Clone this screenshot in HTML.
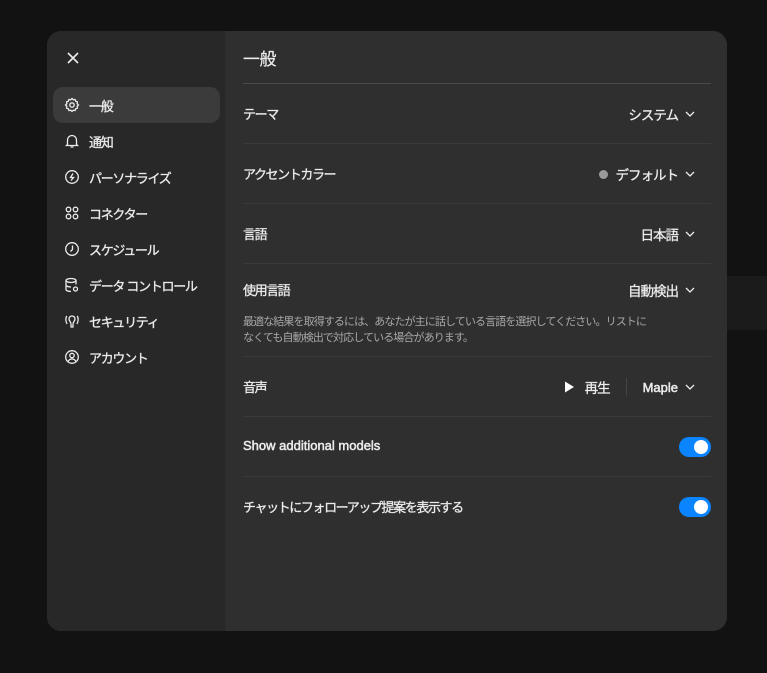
<!DOCTYPE html>
<html><head><meta charset="utf-8"><style>
*{box-sizing:border-box;margin:0;padding:0}
body{width:767px;height:673px;background:#121212;font-family:"Liberation Sans","Noto Sans CJK JP",sans-serif;color:#ececec;position:relative;overflow:hidden}
.band{position:absolute;left:700px;top:276px;width:67px;height:54px;background:#1b1b1b}
.modal{position:absolute;left:47px;top:31px;width:680px;height:600px;background:#2f2f2f;border-radius:14px;overflow:hidden}
.side{position:absolute;left:0;top:0;width:179px;height:600px;background:#282828;border-right:1px solid #2c2c2c}
.close{position:absolute;left:19px;top:20px}
.item{position:absolute;left:6px;width:167px;height:36px;border-radius:10px;display:flex;align-items:center;padding-left:11px;font-size:13px;letter-spacing:-1.3px;color:#ececec;-webkit-text-stroke:0.3px #ececec}
.item svg{margin-right:9px}
.item.active{background:#3b3b3b}
.main{position:absolute;left:196px;top:0;width:468px}
.title{position:absolute;top:14px;left:0;font-size:17px;letter-spacing:-0.5px;-webkit-text-stroke:0.2px #ececec}
.hr0{position:absolute;top:52px;left:0;width:468px;height:1px;background:#4a4a4a}
.row{position:absolute;left:0;width:468px;border-bottom:1px solid #3a3a3a}
.lab{position:absolute;left:0;font-size:13px;letter-spacing:-1.4px;-webkit-text-stroke:0.3px #ececec}
.lab.en{letter-spacing:0;font-size:13px;-webkit-text-stroke:0.5px #ececec}
.val{position:absolute;right:16px;font-size:13.5px;letter-spacing:-1px;display:flex;align-items:center;-webkit-text-stroke:0.3px #ececec}
.chev{margin-left:7px}
.desc{position:absolute;left:0;top:50px;font-size:11px;letter-spacing:-0.9px;color:#a8a8a8;line-height:16px}
.tog{position:absolute;right:0;width:32px;height:20px;border-radius:10px;background:#0a84ff}
.tog:after{content:"";position:absolute;right:3px;top:3px;width:14px;height:14px;border-radius:50%;background:#fff}
</style></head><body>
<div class="band"></div>
<div class="modal">
 <div class="side">
  <svg class="close" width="14" height="14" viewBox="0 0 14 14"><path d="M2 2L12 12M12 2L2 12" stroke="#ececec" stroke-width="1.6"/></svg>
  <div class="item active" style="top:56px"><svg width="16" height="16" viewBox="0 0 16 16" fill="none" stroke="#ececec" stroke-width="1.3"><path d="M8 1.5l1.3 1.3 1.8-.3.6 1.7 1.7.6-.3 1.8L14.5 8l-1.4 1.4.3 1.8-1.7.6-.6 1.7-1.8-.3L8 14.5l-1.3-1.3-1.8.3-.6-1.7-1.7-.6.3-1.8L1.5 8l1.4-1.4-.3-1.8 1.7-.6.6-1.7 1.8.3z"/><circle cx="8" cy="8" r="2.2"/></svg>一般</div>
  <div class="item" style="top:92px"><svg width="16" height="16" viewBox="0 0 16 16" fill="none" stroke="#ececec" stroke-width="1.3"><path d="M3.5 11.5V7a4.5 4.5 0 019 0v4.5l1 1h-11zM6.5 14h3"/></svg>通知</div>
  <div class="item" style="top:128px"><svg width="16" height="16" viewBox="0 0 16 16" fill="none" stroke="#ececec" stroke-width="1.3"><circle cx="8" cy="8" r="6.3"/><path d="M9 4.5L6.5 8.5h3L7 11.5"/></svg>パーソナライズ</div>
  <div class="item" style="top:164px"><svg width="16" height="16" viewBox="0 0 16 16" fill="none" stroke="#ececec" stroke-width="1.3"><circle cx="4.5" cy="4.5" r="2.3"/><circle cx="11.5" cy="4.5" r="2.3"/><circle cx="4.5" cy="11.5" r="2.3"/><circle cx="11.5" cy="11.5" r="2.3"/></svg>コネクター</div>
  <div class="item" style="top:200px"><svg width="16" height="16" viewBox="0 0 16 16" fill="none" stroke="#ececec" stroke-width="1.3"><circle cx="8" cy="8" r="6.3"/><path d="M8.5 4.5v4L6.5 10.5"/></svg>スケジュール</div>
  <div class="item" style="top:236px"><svg width="16" height="16" viewBox="0 0 16 16" fill="none" stroke="#ececec" stroke-width="1.3"><ellipse cx="7" cy="3.5" rx="5" ry="2"/><path d="M2 3.5v9c0 1 2 2 5 2M12 3.5v4M2 8c0 1 2 2 5 2"/><circle cx="11.5" cy="12" r="2"/></svg>データ コントロール</div>
  <div class="item" style="top:272px"><svg width="16" height="16" viewBox="0 0 16 16" fill="none" stroke="#ececec" stroke-width="1.3"><path d="M5 6a3 3 0 016 0c0 2-2 3-2 5v3h-2v-3c0-2-2-3-2-5zM3 3c-2 2-1 6 0 8M13 3c2 2 1 6 0 8"/></svg>セキュリティ</div>
  <div class="item" style="top:308px"><svg width="16" height="16" viewBox="0 0 16 16" fill="none" stroke="#ececec" stroke-width="1.3"><circle cx="8" cy="8" r="6.3"/><circle cx="8" cy="6.5" r="2.2"/><path d="M4 12.5c1-2 2.5-2.5 4-2.5s3 .5 4 2.5"/></svg>アカウント</div>
 </div>
 <div class="main">
  <div class="title">一般</div>
  <div class="hr0"></div>
  <div class="row" style="top:53px;height:60px"><div class="lab" style="top:20px">テーマ</div><div class="val" style="top:20px">システム<svg class="chev" width="10" height="6" viewBox="0 0 10 6"><path d="M1 1l4 4 4-4" stroke="#ececec" fill="none" stroke-width="1.3"/></svg></div></div>
  <div class="row" style="top:113px;height:60px"><div class="lab" style="top:20px">アクセントカラー</div><div class="val" style="top:20px"><span style="width:9px;height:9px;border-radius:50%;background:#9a9a9a;margin-right:8px;display:inline-block"></span>デフォルト<svg class="chev" width="10" height="6" viewBox="0 0 10 6"><path d="M1 1l4 4 4-4" stroke="#ececec" fill="none" stroke-width="1.3"/></svg></div></div>
  <div class="row" style="top:173px;height:60px"><div class="lab" style="top:20px">言語</div><div class="val" style="top:20px">日本語<svg class="chev" width="10" height="6" viewBox="0 0 10 6"><path d="M1 1l4 4 4-4" stroke="#ececec" fill="none" stroke-width="1.3"/></svg></div></div>
  <div class="row" style="top:233px;height:93px"><div class="lab" style="top:16px">使用言語</div><div class="val" style="top:16px">自動検出<svg class="chev" width="10" height="6" viewBox="0 0 10 6"><path d="M1 1l4 4 4-4" stroke="#ececec" fill="none" stroke-width="1.3"/></svg></div><div class="desc">最適な結果を取得するには、あなたが主に話している言語を選択してください。リストに<br>なくても自動検出で対応している場合があります。</div></div>
  <div class="row" style="top:326px;height:60px"><div class="lab" style="top:20px">音声</div><div class="val" style="top:20px"><svg width="10" height="12" viewBox="0 0 10 12" style="margin-right:11px"><path d="M1 0.5v11l9-5.5z" fill="#fff"/></svg>再生<span style="width:1px;height:18px;background:#444;margin:0 16px"></span><span style="letter-spacing:0;font-size:13px;-webkit-text-stroke:0.5px #ececec">Maple</span><svg class="chev" width="10" height="6" viewBox="0 0 10 6"><path d="M1 1l4 4 4-4" stroke="#ececec" fill="none" stroke-width="1.3"/></svg></div></div>
  <div class="row" style="top:386px;height:60px"><div class="lab en" style="top:21px">Show additional models</div><div class="tog" style="top:20px"></div></div>
  <div class="row" style="top:446px;height:60px;border:none"><div class="lab" style="top:20px">チャットにフォローアップ提案を表示する</div><div class="tog" style="top:20px"></div></div>
 </div>
</div>
</body></html>
